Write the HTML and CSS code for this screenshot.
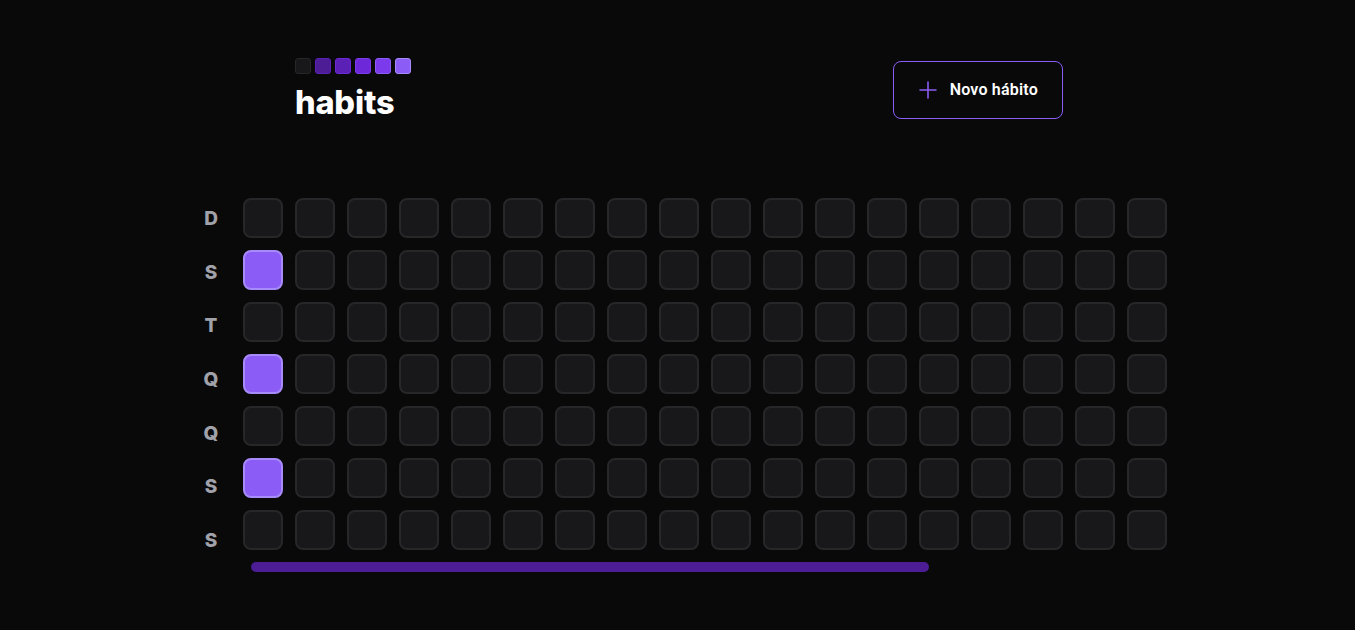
FILE: index.html
```html
<!DOCTYPE html>
<html lang="pt-BR">
<head>
<meta charset="utf-8">
<title>habits</title>
<link rel="stylesheet" href="styles.css">
</head>
<body>
<div class="page">
  <header class="header">
    <div class="brand">
      <div class="logo">
        <span class="sq sq0"></span>
        <span class="sq sq1"></span>
        <span class="sq sq2"></span>
        <span class="sq sq3"></span>
        <span class="sq sq4"></span>
        <span class="sq sq5"></span>
      </div>
      <h1 class="title">habits</h1>
    </div>
    <button class="new-btn" type="button">
      <svg class="plus" width="20" height="20" viewBox="0 0 20 20" fill="none" stroke="#8b5cf6" stroke-width="1.6" stroke-linecap="round"><path d="M2 10h16M10 2v16"/></svg>
      <span>Novo hábito</span>
    </button>
  </header>

  <section class="summary">
    <div class="weekdays">
      <div class="wd">D</div>
      <div class="wd">S</div>
      <div class="wd">T</div>
      <div class="wd">Q</div>
      <div class="wd">Q</div>
      <div class="wd">S</div>
      <div class="wd">S</div>
    </div>
    <div class="scroll">
      <div class="days" id="days"></div>
      <div class="scrollbar"><div class="thumb"></div></div>
    </div>
  </section>
</div>
<script>
  var days = document.getElementById('days');
  for (var c = 0; c < 18; c++) {
    for (var r = 0; r < 7; r++) {
      var d = document.createElement('div');
      d.className = 'day' + ((c === 0 && (r === 1 || r === 3 || r === 5)) ? ' done' : '');
      d.style.gridColumn = (c + 1);
      d.style.gridRow = (r + 1);
      days.appendChild(d);
    }
  }
</script>
</body>
</html>
```

FILE: styles.css
```css
* { box-sizing: border-box; }
html, body { margin: 0; padding: 0; }
body {
  background: #09090a;
  color: #fff;
  font-family: Inter, "Noto Sans", sans-serif;
  width: 1355px;
  height: 630px;
  overflow: hidden;
}
.page {
  padding-top: 58px;
}
.header {
  width: 768px;
  margin-left: 295px;
  display: flex;
  justify-content: space-between;
  align-items: flex-start;
}
.brand {
  display: flex;
  flex-direction: column;
  gap: 10px;
}
.logo {
  display: flex;
  gap: 4px;
}
.sq {
  width: 16px;
  height: 16px;
  border-radius: 3px;
  border: 1px solid;
}
.sq0 { background: #18181b; border-color: #27272a; }
.sq1 { background: #4c1d95; border-color: #5b21b6; }
.sq2 { background: #5b21b6; border-color: #6d28d9; }
.sq3 { background: #6d28d9; border-color: #7c3aed; }
.sq4 { background: #7c3aed; border-color: #8b5cf6; }
.sq5 { background: #8b5cf6; border-color: #a78bfa; }
.title {
  margin: 0;
  font-size: 32.5px;
  line-height: 38px;
  font-weight: 800;
  letter-spacing: -0.2px;
}
.new-btn {
  margin-top: 3px;
  display: flex;
  align-items: center;
  gap: 12px;
  padding: 16px 24px;
  background: transparent;
  border: 1px solid #8b5cf6;
  border-radius: 8px;
  color: #fff;
  font-family: Roboto, Inter, sans-serif;
  font-weight: 600;
  font-size: 16px;
  line-height: 24px;
  letter-spacing: 0.2px;
}
.plus { display: block; }

.summary {
  margin-top: 76px;
  margin-left: 191px;
  display: flex;
  align-items: flex-start;
  gap: 12px;
}
.weekdays {
  display: grid;
  grid-template-rows: repeat(7, 40px);
  row-gap: 13.67px;
}
.wd {
  width: 40px;
  height: 40px;
  display: flex;
  align-items: center;
  justify-content: center;
  color: #a1a1aa;
  font-weight: 800;
  font-size: 19px;
  padding-top: 1px;
}
.days {
  display: grid;
  grid-template-rows: repeat(7, 40px);
  grid-template-columns: repeat(18, 40px);
  gap: 12px;
}
.day {
  width: 40px;
  height: 40px;
  background: #18181b;
  border: 2px solid #27272a;
  border-radius: 8px;
}
.day.done {
  background: #8b5cf6;
  border-color: #a78bfa;
}
.scrollbar {
  margin-top: 12px;
  padding-left: 8px;
}
.thumb {
  width: 678px;
  height: 10px;
  border-radius: 5px;
  background: #4c1d95;
}
```
